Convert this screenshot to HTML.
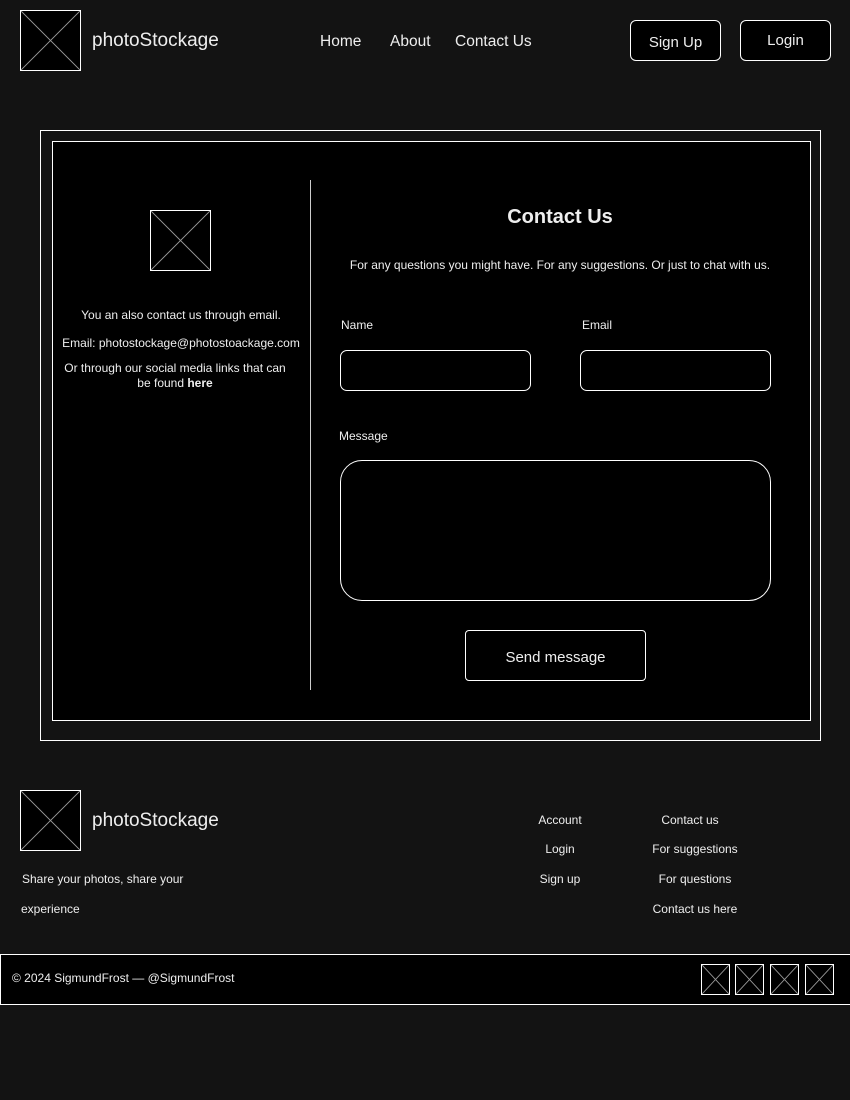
<!DOCTYPE html>
<html><head><meta charset="utf-8"><style>
*{margin:0;padding:0;box-sizing:border-box}
body{width:850px;height:1100px;background:#131313;color:#fff;font-family:"Liberation Sans",Arial,sans-serif;position:relative;overflow:hidden}
.a{position:absolute}
.ph{position:absolute;background:#000;border:1px solid #fff}
.ph svg{position:absolute;left:0;top:0;width:100%;height:100%}
.btn{position:absolute;background:#000;border:1px solid #fff;border-radius:6px;text-align:center;font-size:15px;color:#eee}
.t{position:absolute;white-space:nowrap;color:#eee}
.inp{position:absolute;border:1px solid #fff;border-radius:7px;background:#000}
</style></head><body>
<div class="ph" style="left:20px;top:10px;width:61px;height:61px"><svg viewBox="0 0 61 61" preserveAspectRatio="none"><path d="M0 0L61 61M61 0L0 61" stroke="#999" stroke-width="1"/></svg></div>
<div class="t" style="left:92px;top:30px;font-size:19px">photoStockage</div>
<div class="t" style="left:320px;top:33px;font-size:15.5px">Home</div>
<div class="t" style="left:390px;top:33px;font-size:15.5px">About</div>
<div class="t" style="left:455px;top:33px;font-size:15.5px">Contact Us</div>
<div class="btn" style="left:630px;top:20px;width:91px;height:41px;line-height:44px">Sign Up</div>
<div class="btn" style="left:740px;top:20px;width:91px;height:41px;line-height:40px">Login</div>

<div class="a" style="left:40px;top:130px;width:781px;height:611px;border:1px solid #fff"></div>
<div class="a" style="left:52px;top:141px;width:759px;height:580px;border:1px solid #fff;background:#000"></div>
<div class="a" style="left:310px;top:180px;width:1px;height:510px;background:#ccc"></div>
<div class="ph" style="left:150px;top:210px;width:61px;height:61px"><svg viewBox="0 0 61 61" preserveAspectRatio="none"><path d="M0 0L61 61M61 0L0 61" stroke="#999"/></svg></div>
<div class="t" style="left:52px;width:258px;text-align:center;top:308px;font-size:12px">You an also contact us through email.</div>
<div class="t" style="left:52px;width:258px;text-align:center;top:336px;font-size:12px">Email: photostockage@photostoackage.com</div>
<div class="a" style="left:60px;width:230px;text-align:center;top:361px;font-size:12px;line-height:15px;color:#eee">Or through our social media links that can be found <b>here</b></div>
<div class="t" style="left:340px;width:440px;text-align:center;top:206px;font-size:20px;font-weight:bold">Contact Us</div>
<div class="t" style="left:340px;width:440px;text-align:center;top:258px;font-size:12px">For any questions you might have. For any suggestions. Or just to chat with us.</div>
<div class="t" style="left:341px;top:318px;font-size:12px">Name</div>
<div class="t" style="left:582px;top:318px;font-size:12px">Email</div>
<div class="inp" style="left:340px;top:350px;width:191px;height:41px"></div>
<div class="inp" style="left:580px;top:350px;width:191px;height:41px"></div>
<div class="t" style="left:339px;top:429px;font-size:12px">Message</div>
<div class="inp" style="left:340px;top:460px;width:431px;height:141px;border-radius:22px"></div>
<div class="btn" style="left:465px;top:630px;width:181px;height:51px;line-height:53px;border-radius:4px">Send message</div>

<div class="ph" style="left:20px;top:790px;width:61px;height:61px"><svg viewBox="0 0 61 61" preserveAspectRatio="none"><path d="M0 0L61 61M61 0L0 61" stroke="#999"/></svg></div>
<div class="t" style="left:92px;top:810px;font-size:19px">photoStockage</div>
<div class="t" style="left:22px;top:872px;font-size:12px">Share your photos, share your</div>
<div class="t" style="left:21px;top:902px;font-size:12px">experience</div>
<div class="t" style="left:520px;width:80px;text-align:center;top:813px;font-size:12px">Account</div>
<div class="t" style="left:520px;width:80px;text-align:center;top:842px;font-size:12px">Login</div>
<div class="t" style="left:520px;width:80px;text-align:center;top:872px;font-size:12px">Sign up</div>
<div class="t" style="left:640px;width:100px;text-align:center;top:813px;font-size:12px">Contact us</div>
<div class="t" style="left:645px;width:100px;text-align:center;top:842px;font-size:12px">For suggestions</div>
<div class="t" style="left:645px;width:100px;text-align:center;top:872px;font-size:12px">For questions</div>
<div class="t" style="left:645px;width:100px;text-align:center;top:902px;font-size:12px">Contact us here</div>

<div class="a" style="left:0;top:954px;width:851px;height:51px;border:1px solid #fff;background:#000"></div>
<div class="t" style="left:12px;top:971px;font-size:12px">© 2024 SigmundFrost — @SigmundFrost</div>
<div class="ph" style="left:701px;top:964px;width:29px;height:31px"><svg viewBox="0 0 29 31" preserveAspectRatio="none"><path d="M0 0L29 31M29 0L0 31" stroke="#999"/></svg></div>
<div class="ph" style="left:735px;top:964px;width:29px;height:31px"><svg viewBox="0 0 29 31" preserveAspectRatio="none"><path d="M0 0L29 31M29 0L0 31" stroke="#999"/></svg></div>
<div class="ph" style="left:770px;top:964px;width:29px;height:31px"><svg viewBox="0 0 29 31" preserveAspectRatio="none"><path d="M0 0L29 31M29 0L0 31" stroke="#999"/></svg></div>
<div class="ph" style="left:805px;top:964px;width:29px;height:31px"><svg viewBox="0 0 29 31" preserveAspectRatio="none"><path d="M0 0L29 31M29 0L0 31" stroke="#999"/></svg></div>
</body></html>
